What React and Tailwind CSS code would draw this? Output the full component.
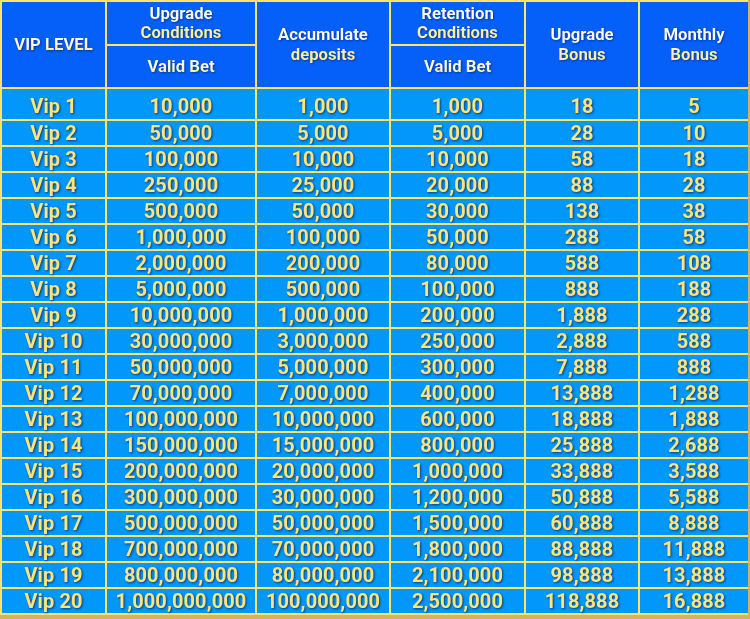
import React from 'react';

const rows = [
  ['Vip 1', '10,000', '1,000', '1,000', '18', '5'],
  ['Vip 2', '50,000', '5,000', '5,000', '28', '10'],
  ['Vip 3', '100,000', '10,000', '10,000', '58', '18'],
  ['Vip 4', '250,000', '25,000', '20,000', '88', '28'],
  ['Vip 5', '500,000', '50,000', '30,000', '138', '38'],
  ['Vip 6', '1,000,000', '100,000', '50,000', '288', '58'],
  ['Vip 7', '2,000,000', '200,000', '80,000', '588', '108'],
  ['Vip 8', '5,000,000', '500,000', '100,000', '888', '188'],
  ['Vip 9', '10,000,000', '1,000,000', '200,000', '1,888', '288'],
  ['Vip 10', '30,000,000', '3,000,000', '250,000', '2,888', '588'],
  ['Vip 11', '50,000,000', '5,000,000', '300,000', '7,888', '888'],
  ['Vip 12', '70,000,000', '7,000,000', '400,000', '13,888', '1,288'],
  ['Vip 13', '100,000,000', '10,000,000', '600,000', '18,888', '1,888'],
  ['Vip 14', '150,000,000', '15,000,000', '800,000', '25,888', '2,688'],
  ['Vip 15', '200,000,000', '20,000,000', '1,000,000', '33,888', '3,588'],
  ['Vip 16', '300,000,000', '30,000,000', '1,200,000', '50,888', '5,588'],
  ['Vip 17', '500,000,000', '50,000,000', '1,500,000', '60,888', '8,888'],
  ['Vip 18', '700,000,000', '70,000,000', '1,800,000', '88,888', '11,888'],
  ['Vip 19', '800,000,000', '80,000,000', '2,100,000', '98,888', '13,888'],
  ['Vip 20', '1,000,000,000', '100,000,000', '2,500,000', '118,888', '16,888'],
];

function HeadCell({ className = '', lead = 'leading-[19px]', children }) {
  return (
    <div className={`flex items-center justify-center bg-[#0560fa] text-center ${className}`}>
      <span className={`bg-gradient-to-b from-white from-35% to-[#fff09a] to-75% bg-clip-text text-transparent text-[16.7px] font-bold ${lead} drop-shadow-[1px_1px_1px_rgba(0,0,40,0.45)]`}>
        {children}
      </span>
    </div>
  );
}

export default function App() {
  return (
    <div className="w-[750px] h-[619px] bg-[#d4b262] font-['Roboto',sans-serif]">
      <div className="grid grid-cols-[103px_148px_132px_133px_112px_108px] grid-rows-[42px_41px] gap-[2px] bg-[#ffe46c] p-[2px] pb-0 w-[748px]">
        <HeadCell className="row-span-2">VIP LEVEL</HeadCell>
        <HeadCell>Upgrade<br />Conditions</HeadCell>
        <HeadCell className="row-span-2" lead="leading-[20px]">Accumulate<br />deposits</HeadCell>
        <HeadCell>Retention<br />Conditions</HeadCell>
        <HeadCell className="row-span-2" lead="leading-[20px]">Upgrade<br />Bonus</HeadCell>
        <HeadCell className="row-span-2" lead="leading-[20px]">Monthly<br />Bonus</HeadCell>
        <HeadCell>Valid Bet</HeadCell>
        <HeadCell>Valid Bet</HeadCell>
      </div>
      <div className="grid grid-cols-[103px_148px_132px_133px_112px_108px] grid-rows-[30px] auto-rows-[24px] gap-[2px] bg-[#ffe46c] p-[2px] w-[748px]">
        {rows.map((r, ri) =>
          r.map((v, i) => (
            <div
              key={r[0] + i}
              className={`flex items-center justify-center bg-[#0197fb] ${ri === 0 ? 'pt-[3px]' : ''}`}
            >
              <span className="text-[20px] font-bold leading-none tracking-[0.1px] text-[#ffe37c] drop-shadow-[1px_1px_1px_rgba(0,0,40,0.6)]">
                {v}
              </span>
            </div>
          ))
        )}
      </div>
    </div>
  );
}
